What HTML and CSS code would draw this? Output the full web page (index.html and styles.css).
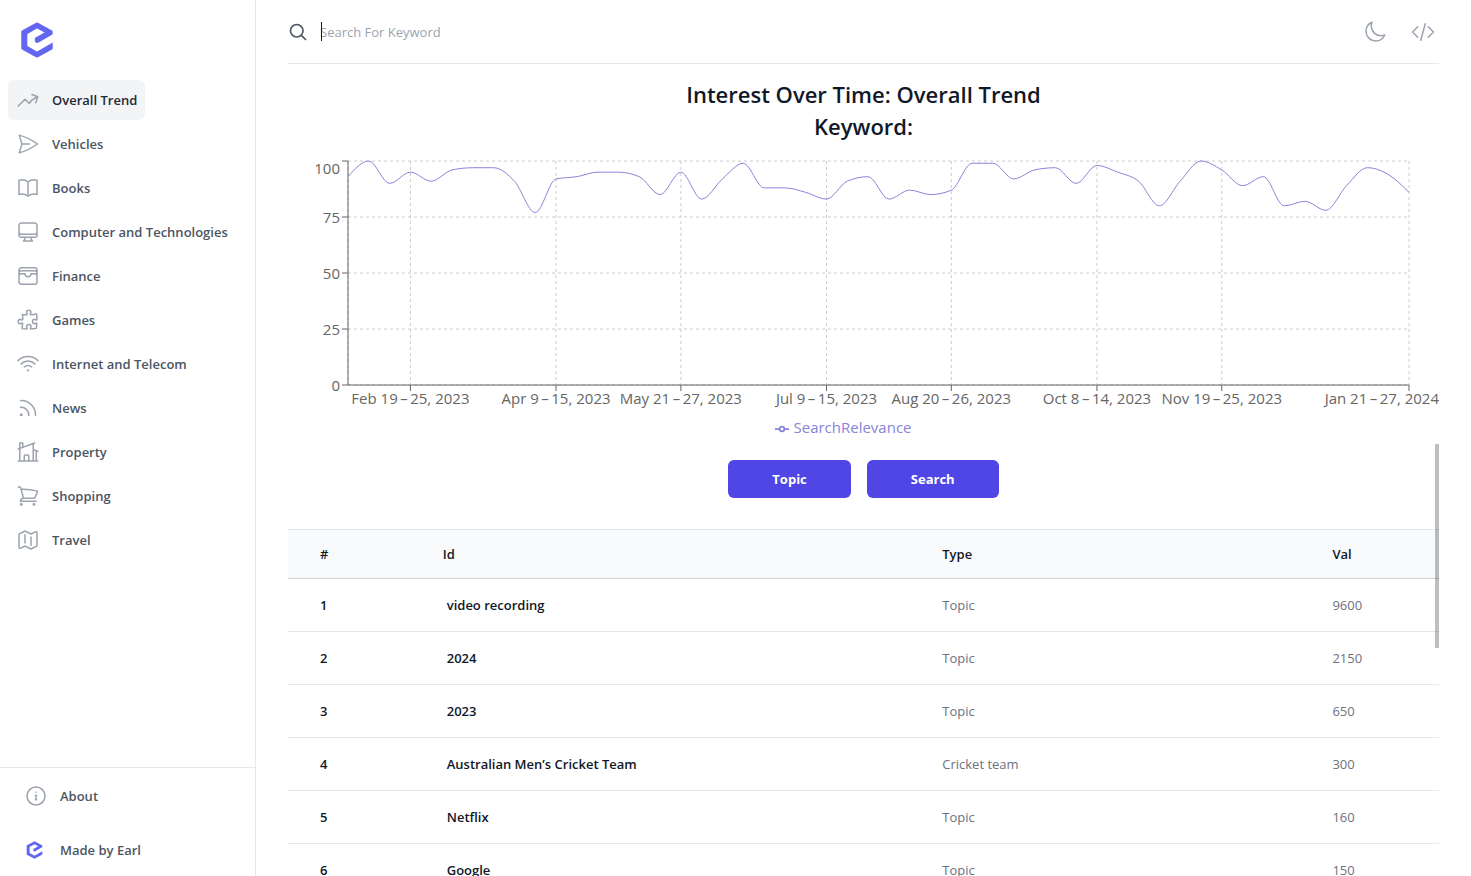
FILE: index.html
```html
<!DOCTYPE html>
<html lang="en">
<head>
<meta charset="utf-8">
<meta name="viewport" content="width=device-width, initial-scale=1">
<title>Interest Over Time</title>
<link rel="stylesheet" href="styles.css">
</head>
<body>
<svg class="defs" aria-hidden="true">
  <symbol id="logo" viewBox="0 0 32 36">
    <path d="M15 .8Q16 .2 17 .8L31 8.6Q31.7 9 31.7 9.800V11.500Q31.700 12.300 31 12.700L17.600 20.600Q16 21.400 14.800 20.600Q13.800 20 13.800 18.400V16.800Q13.800 16 14.600 15.500L23.500 10.400L16.600 6.800Q16 6.500 15.400 6.800L6.900 11.700Q6.300 12 6.300 12.700V23.300Q6.300 24 6.900 24.300L15.400 29.200Q16 29.500 16.600 29.200L31.700 20.500V26.300Q31.700 27 31 27.400L17 35.200Q16 35.800 15 35.200L1 27.400Q.3 27 .3 26.200V9.800Q.3 9 1 8.600Z"/>
  </symbol>
</svg>
<div class="app">
  <aside class="sidebar">
    <a class="brand" href="#" aria-label="Home"><svg class="brand-logo"><use href="#logo"/></svg></a>
    <nav class="nav" aria-label="Categories">
      <a class="item active" href="#"><svg class="icon" viewBox="0 0 24 24"><path d="M2.250 18L9 11.250l4.306 4.307a11.950 11.950 0 015.814-5.519l2.740-1.220m0 0l-5.940-2.280m5.940 2.280l-2.280 5.941"/></svg>Overall Trend</a>
      <a class="item" href="#"><svg class="icon" viewBox="0 0 24 24"><path d="M6 12L3.269 3.126A59.768 59.768 0 0121.485 12 59.770 59.770 0 013.270 20.876L5.999 12zm0 0h7.500"/></svg>Vehicles</a>
      <a class="item" href="#"><svg class="icon" viewBox="0 0 24 24"><path d="M12 6.042A8.967 8.967 0 006 3.750c-1.052 0-2.062.180-3 .512v14.250A8.987 8.987 0 016 18c2.305 0 4.408.867 6 2.292m0-14.250a8.966 8.966 0 016-2.292c1.052 0 2.062.180 3 .512v14.250A8.987 8.987 0 0018 18a8.967 8.967 0 00-6 2.292m0-14.250v14.250"/></svg>Books</a>
      <a class="item" href="#"><svg class="icon" viewBox="0 0 24 24"><path d="M9 17.25v1.007a3 3 0 01-.879 2.122L7.5 21h9l-.621-.621A3 3 0 0115 18.257V17.25m6-12V15a2.25 2.25 0 01-2.25 2.25H5.25A2.25 2.25 0 013 15V5.25m18 0A2.25 2.25 0 0018.75 3H5.25A2.25 2.25 0 003 5.25m18 0V12a2.25 2.25 0 01-2.25 2.25H5.25A2.25 2.25 0 013 12V5.25"/></svg>Computer and Technologies</a>
      <a class="item" href="#"><svg class="icon" viewBox="0 0 24 24"><path d="M21 12a2.25 2.25 0 00-2.25-2.25H15a3 3 0 11-6 0H5.25A2.25 2.25 0 003 12m18 0v6a2.25 2.25 0 01-2.25 2.25H5.25A2.25 2.25 0 013 18v-6m18 0V9M3 12V9m18 0a2.25 2.25 0 00-2.25-2.25H5.25A2.25 2.25 0 003 9m18 0V6a2.25 2.25 0 00-2.25-2.25H5.25A2.25 2.25 0 003 6v3"/></svg>Finance</a>
      <a class="item" href="#"><svg class="icon" viewBox="0 0 24 24"><path d="M14.25 6.087c0-.355.186-.676.401-.959.221-.29.349-.634.349-1.003 0-1.036-1.007-1.875-2.25-1.875s-2.25.84-2.25 1.875c0 .369.128.713.349 1.003.215.283.401.604.401.959v0a.64.64 0 01-.657.643 48.39 48.39 0 01-4.163-.3c.186 1.613.293 3.25.315 4.907a.656.656 0 01-.658.663v0c-.355 0-.676-.186-.959-.401a1.647 1.647 0 00-1.003-.349c-1.036 0-1.875 1.007-1.875 2.25s.84 2.25 1.875 2.25c.369 0 .713-.128 1.003-.349.283-.215.604-.401.959-.401v0c.31 0 .555.26.532.57a48.039 48.039 0 01-.642 5.056c1.518.19 3.058.309 4.616.354a.64.64 0 00.657-.643v0c0-.355-.186-.676-.401-.959a1.647 1.647 0 01-.349-1.003c0-1.035 1.008-1.875 2.25-1.875 1.243 0 2.25.84 2.25 1.875 0 .369-.128.713-.349 1.003-.215.283-.4.604-.4.959v0c0 .333.277.599.61.58a48.1 48.1 0 005.427-.63 48.05 48.05 0 00.582-4.717.532.532 0 00-.533-.57v0c-.355 0-.676.186-.959.401-.29.221-.634.349-1.003.349-1.035 0-1.875-1.007-1.875-2.25s.84-2.25 1.875-2.25c.37 0 .713.128 1.003.349.283.215.604.401.96.401v0a.656.656 0 00.658-.663 48.422 48.422 0 00-.37-5.36c-1.886.342-3.81.574-5.766.689a.578.578 0 01-.61-.58v0z"/></svg>Games</a>
      <a class="item" href="#"><svg class="icon" viewBox="0 0 24 24"><path d="M8.288 15.038a5.25 5.25 0 017.424 0M5.106 11.856c3.807-3.808 9.98-3.808 13.788 0M1.924 8.674c5.565-5.565 14.587-5.565 20.152 0M12.53 18.22l-.53.53-.53-.53a.75.75 0 011.06 0z"/></svg>Internet and Telecom</a>
      <a class="item" href="#"><svg class="icon" viewBox="0 0 24 24"><path d="M12.75 19.5v-.75a7.5 7.5 0 00-7.5-7.5H4.5m0-6.75h.75c7.87 0 14.25 6.38 14.25 14.25v.75M6 18.75a.75.75 0 11-1.5 0 .75.75 0 011.5 0z"/></svg>News</a>
      <a class="item" href="#"><svg class="icon" viewBox="0 0 24 24"><path d="M8.25 21v-4.875c0-.621.504-1.125 1.125-1.125h2.25c.621 0 1.125.504 1.125 1.125V21m0 0h4.5V3.545M12.75 21h7.5V10.75M2.25 21h1.5m18 0h-18M2.25 9l4.5-1.636M18.75 3l-1.5.545m0 6.205l3 1m1.5.5l-1.5-.5M6.75 7.364V3h-3v18m3-13.636l10.5-3.819"/></svg>Property</a>
      <a class="item" href="#"><svg class="icon" viewBox="0 0 24 24"><path d="M2.25 3h1.386c.51 0 .955.343 1.087.835l.383 1.437M7.5 14.25a3 3 0 00-3 3h15.75m-12.75-3h11.218c1.121-2.3 2.1-4.684 2.924-7.138a60.114 60.114 0 00-16.536-1.84M7.5 14.25L5.106 5.272M6 20.25a.75.75 0 11-1.5 0 .75.75 0 011.5 0zm12.75 0a.75.75 0 11-1.5 0 .75.75 0 011.5 0z"/></svg>Shopping</a>
      <a class="item" href="#"><svg class="icon" viewBox="0 0 24 24"><path d="M9 6.75V15m6-6v8.25m.503 3.498l4.875-2.437c.381-.19.622-.58.622-1.006V4.82c0-.836-.88-1.38-1.628-1.006l-3.869 1.934c-.317.159-.69.159-1.006 0L9.503 3.252a1.125 1.125 0 00-1.006 0L3.622 5.689C3.24 5.88 3 6.27 3 6.695V19.18c0 .836.88 1.38 1.628 1.006l3.869-1.934c.317-.159.69-.159 1.006 0l4.994 2.497c.317.158.69.158 1.006 0z"/></svg>Travel</a>
    </nav>
    <div class="side-footer">
      <a class="item" href="#"><svg class="icon" viewBox="0 0 24 24"><path d="M11.25 11.25l.041-.02a.75.75 0 011.063.852l-.708 2.836a.75.75 0 001.063.853l.041-.021M21 12a9 9 0 11-18 0 9 9 0 0118 0zm-9-3.75h.008v.008H12V8.25z"/></svg>About</a>
      <a class="item" href="#"><span class="maker"><svg class="maker-logo"><use href="#logo"/></svg></span>Made by Earl</a>
    </div>
  </aside>
  <main class="main">
    <header class="topbar">
      <form class="search" role="search">
        <label class="search-label" for="keyword" aria-label="Search"><svg class="search-icon" viewBox="0 0 24 24"><path d="M21 21l-5.197-5.197m0 0A7.500 7.500 0 105.196 5.196a7.500 7.500 0 0010.607 10.607z"/></svg></label>
        <div class="field"><input id="keyword" class="search-input" type="text" placeholder="Search For Keyword"><span class="caret"></span></div>
      </form>
      <div class="actions">
        <button class="icon-button" type="button" aria-label="Dark mode"><svg class="icon" viewBox="0 0 24 24"><path d="M21.752 15.002A9.718 9.718 0 0118 15.750c-5.385 0-9.750-4.365-9.750-9.750 0-1.330.266-2.597.748-3.752A9.753 9.753 0 003 11.250C3 16.635 7.365 21 12.750 21a9.753 9.753 0 009.002-5.998z"/></svg></button>
        <a class="icon-button" href="#" aria-label="Source code"><svg class="icon" viewBox="0 0 24 24"><path d="M17.250 6.750L22.500 12l-5.250 5.250m-10.500 0L1.500 12l5.250-5.250m7.500-3l-4.500 16.500"/></svg></a>
      </div>
    </header>
    <h1 class="title">Interest Over Time: Overall Trend<br>Keyword:</h1>
    <svg id="chart" class="chart" role="img" aria-label="Search relevance by week"></svg>
    <div class="legend"><svg class="legend-icon" viewBox="0 0 32 32"><path d="M0 16h10.667a5.333 5.333 0 1110.666 0H32M21.333 16a5.333 5.333 0 11-10.666 0"/></svg>SearchRelevance</div>
    <section class="results">
      <div class="scroller">
        <div class="toggles">
          <button class="toggle" type="button">Topic</button>
          <button class="toggle" type="button">Search</button>
        </div>
        <table class="table">
          <colgroup><col class="col-num"><col class="col-id"><col class="col-type"><col></colgroup>
          <thead><tr><th scope="col">#</th><th scope="col">Id</th><th scope="col">Type</th><th scope="col">Val</th></tr></thead>
          <tbody>
            <tr><td>1</td><td>video recording</td><td>Topic</td><td>9600</td></tr>
            <tr><td>2</td><td>2024</td><td>Topic</td><td>2150</td></tr>
            <tr><td>3</td><td>2023</td><td>Topic</td><td>650</td></tr>
            <tr><td>4</td><td>Australian Men’s Cricket Team</td><td>Cricket team</td><td>300</td></tr>
            <tr><td>5</td><td>Netflix</td><td>Topic</td><td>160</td></tr>
            <tr><td>6</td><td>Google</td><td>Topic</td><td>150</td></tr>
          </tbody>
        </table>
      </div>
      <div class="thumb"></div>
    </section>
  </main>
</div>
<script src="script.js"></script>
</body>
</html>
```

FILE: styles.css
```css
* { box-sizing: border-box; }
body {
  margin: 0;
  font: 13px/20px "Segoe UI", "Open Sans", "Noto Sans", sans-serif;
  color: #111827;
  background: #fff;
}
a { color: inherit; text-decoration: none; }
button { font: inherit; border: 0; padding: 0; background: none; cursor: pointer; }
.defs { position: absolute; width: 0; height: 0; }
.app { display: flex; height: 100vh; overflow: hidden; }

.sidebar {
  display: flex;
  flex-direction: column;
  flex: 0 0 256px;
  border-right: 1px solid #e5e7eb;
}
.brand { display: block; height: 80px; padding: 22px 21px; }
.brand-logo { display: block; width: 32px; height: 36px; fill: #6366f1; }
.nav {
  display: flex;
  flex: 1;
  flex-direction: column;
  align-items: flex-start;
  gap: 4px;
  padding: 0 8px;
}
.item {
  display: flex;
  align-items: center;
  gap: 12px;
  height: 40px;
  padding: 0 8px;
  border-radius: 6px;
  font-weight: 600;
  color: #4b5563;
  white-space: nowrap;
}
.active { background: #f3f4f6; color: #1f2937; }
.icon {
  display: block;
  flex: none;
  width: 24px;
  height: 24px;
  fill: none;
  stroke: #9ca3af;
  stroke-width: 1.5;
  stroke-linecap: round;
  stroke-linejoin: round;
}
.side-footer {
  display: flex;
  flex-direction: column;
  gap: 14px;
  padding: 8px 16px 6px;
  border-top: 1px solid #e5e7eb;
}
.maker { display: flex; width: 24px; padding-left: 2px; }
.maker-logo { width: 17px; height: 18px; fill: #6366f1; }

.main {
  display: flex;
  flex: 1;
  flex-direction: column;
  min-width: 0;
  padding: 0 32px;
}
.topbar {
  display: flex;
  flex: none;
  align-items: center;
  justify-content: space-between;
  height: 64px;
  border-bottom: 1px solid #e5e7eb;
}
.search { display: flex; flex: 1; align-items: center; gap: 12px; }
.search-icon {
  display: block;
  width: 20px;
  height: 20px;
  fill: none;
  stroke: #4b5563;
  stroke-width: 2;
  stroke-linecap: round;
}
.field { position: relative; flex: 1; }
.search-input {
  display: block;
  width: 100%;
  height: 32px;
  padding: 0;
  border: 0;
  outline: 0;
  font: inherit;
  color: #111827;
  background: transparent;
}
.search-input::placeholder { color: #9ca3af; opacity: 1; }
.caret { position: absolute; left: 1px; top: 6px; width: 1px; height: 19px; background: #111827; }
.actions { display: flex; gap: 24px; padding-right: 4px; }

.title {
  margin: 14px 0;
  font-size: 22px;
  line-height: 32px;
  font-weight: 600;
  text-align: center;
}
.chart { display: block; flex: none; width: 100%; height: 260px; overflow: visible; }
.grid { stroke: #ccc; stroke-dasharray: 3 3; }
.axis { stroke: #666; }
.tick { fill: #666; font-size: 15px; }
.line { fill: none; stroke: #8884d8; }
.legend {
  display: flex;
  align-items: center;
  justify-content: center;
  gap: 4px;
  height: 22px;
  margin-bottom: 6px;
  padding-right: 40px;
  font-size: 15px;
  color: #8884d8;
}
.legend-icon { width: 14px; height: 14px; margin-top: 3px; fill: none; stroke: #8884d8; stroke-width: 4; }

.results { position: relative; flex: 1; min-height: 0; }
.scroller { height: 100%; overflow-y: auto; scrollbar-width: none; }
.thumb { position: absolute; top: 0; right: 0; width: 4px; height: 204px; background: rgba(0, 0, 0, .25); }
.toggles { display: flex; justify-content: center; gap: 16px; padding: 16px 0 31px; }
.toggle {
  height: 38px;
  padding: 0 44px;
  border-radius: 6px;
  font-weight: 700;
  color: #fff;
  background: #4f46e5;
}
.table { width: 100%; table-layout: fixed; border-collapse: separate; border-spacing: 0; }
.col-num { width: 12.4%; }
.col-id { width: 43.4%; }
.col-type { width: 33.9%; }
.table th {
  padding: 14px 12px;
  border-top: 1px solid #e5e7eb;
  border-bottom: 1px solid #d1d5db;
  font-weight: 600;
  text-align: left;
  background: #f9fafb;
}
.table td { padding: 16px 12px; border-bottom: 1px solid #e5e7eb; color: #6b7280; }
.table th:first-child, .table td:first-child { padding-left: 32px; }
.table td:nth-child(2) { padding-left: 16px; }
.table td:nth-child(-n+2) { font-weight: 600; color: #111827; }
```

FILE: script.js
```js
const values = [
  93, 100, 90, 95, 91, 96, 97, 97, 91, 77, 92, 93, 95, 95, 93, 85, 95, 83,
  92, 99, 88, 88, 86, 83, 91, 93, 83, 87, 85, 87, 99, 99, 92, 96, 97, 90,
  98, 95, 91, 80, 91, 100, 96, 89, 93, 80, 82, 78, 89, 97, 94, 86
];
const dates = {
  3: "Feb 19\u2009–\u200925, 2023",
  10: "Apr 9\u2009–\u200915, 2023",
  16: "May 21\u2009–\u200927, 2023",
  23: "Jul 9\u2009–\u200915, 2023",
  29: "Aug 20\u2009–\u200926, 2023",
  36: "Oct 8\u2009–\u200914, 2023",
  42: "Nov 19\u2009–\u200925, 2023",
  51: "Jan 21\u2009–\u200927, 2024"
};
const chart = document.getElementById("chart");

// Monotone cubic interpolation through evenly spaced points.
function curve(points) {
  const n = points.length;
  const h = points[1][0] - points[0][0];
  const slope = i => (points[i + 1][1] - points[i][1]) / h;
  const t = points.map((_, i) => {
    if (i === 0 || i === n - 1) return 0;
    const a = slope(i - 1), b = slope(i);
    return (Math.sign(a) + Math.sign(b)) * Math.min(Math.abs(a), Math.abs(b), Math.abs(a + b) / 4) || 0;
  });
  t[0] = (3 * slope(0) - t[1]) / 2;
  t[n - 1] = (3 * slope(n - 2) - t[n - 2]) / 2;
  let d = `M${points[0]}`;
  for (let i = 1; i < n; i++) {
    const [x0, y0] = points[i - 1], [x1, y1] = points[i];
    d += `C${x0 + h / 3},${y0 + t[i - 1] * h / 3} ${x1 - h / 3},${y1 - t[i] * h / 3} ${x1},${y1}`;
  }
  return d;
}

function draw() {
  const width = chart.clientWidth;
  const left = 60, right = width - 30, top = 5, bottom = 229;
  const x = i => left + (right - left) * i / (values.length - 1);
  const y = v => bottom - (bottom - top) * v / 100;
  const line = (c, x1, y1, x2, y2) => `<line class="${c}" x1="${x1}" y1="${y1}" x2="${x2}" y2="${y2}"/>`;
  let grid = line("grid", left, top, left, bottom);
  let axes = line("axis", left, bottom, right, bottom) + line("axis", left, top, left, bottom);
  for (const v of [0, 25, 50, 75, 100]) {
    grid += line("grid", left, y(v), right, y(v));
    axes += line("axis", left - 6, y(v), left, y(v));
    axes += `<text class="tick" text-anchor="end" x="${left - 8}" y="${v === 100 ? 18 : y(v) + 6}">${v}</text>`;
  }
  for (const [i, label] of Object.entries(dates)) {
    const last = i == values.length - 1;
    grid += line("grid", x(i), top, x(i), bottom);
    axes += line("axis", x(i), bottom, x(i), bottom + 6);
    axes += `<text class="tick" text-anchor="${last ? "end" : "middle"}" x="${last ? width : x(i)}" y="248">${label}</text>`;
  }
  chart.innerHTML = grid + axes + `<path class="line" d="${curve(values.map((v, i) => [x(i), y(v)]))}"/>`;
}

draw();
window.addEventListener("resize", draw);
```
